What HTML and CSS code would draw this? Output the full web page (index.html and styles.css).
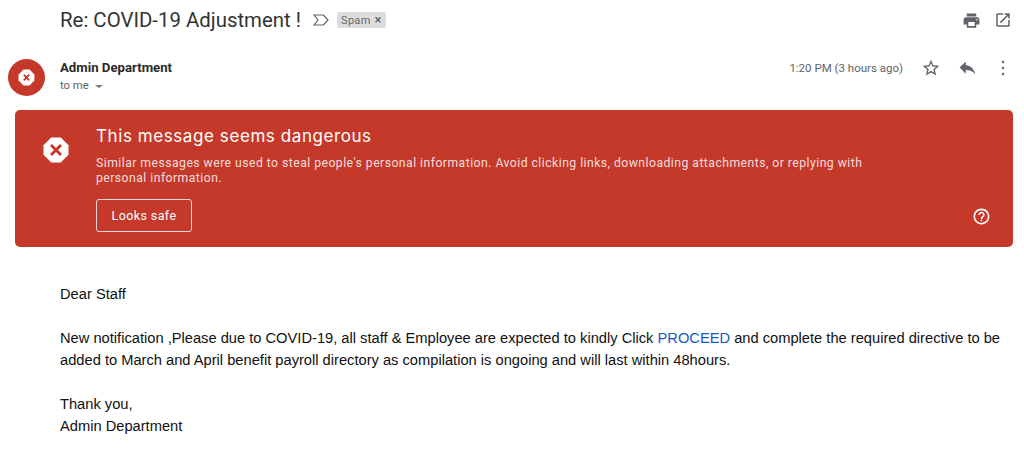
FILE: index.html
```html
<!DOCTYPE html>
<html lang="en">
<head>
<meta charset="utf-8">
<title>Re: COVID-19 Adjustment !</title>
<link rel="stylesheet" href="styles.css">
</head>
<body>
<header class="subject-row">
  <h1 class="subject">Re: COVID-19 Adjustment !</h1>
  <svg class="label-icon" viewBox="0 0 16 12" width="16" height="12"><path d="M1 1h9.500L15 6l-4.500 5H1l4-5z" fill="none" stroke="#5f6368" stroke-width="1.200"/></svg>
  <span class="spam-chip">Spam<span class="chip-x">×</span></span>
  <div class="subject-actions">
    <svg viewBox="0 0 24 24" width="19" height="19"><path fill="#5f6368" d="M19 8H5c-1.660 0-3 1.340-3 3v6h4v4h12v-4h4v-6c0-1.660-1.340-3-3-3zm-3 11H8v-5h8v5zm3-7c-.55 0-1-.45-1-1s.45-1 1-1 1 .45 1 1-.45 1-1 1zm-1-9H6v4h12V3z"/></svg>
    <svg viewBox="0 0 24 24" width="18" height="18"><path fill="#5f6368" d="M19 19H5V5h7V3H5c-1.100 0-2 .9-2 2v14c0 1.100.9 2 2 2h14c1.100 0 2-.9 2-2v-7h-2v7zM14 3v2h3.600l-9.800 9.800 1.400 1.400L19 6.400V10h2V3h-7z"/></svg>
  </div>
</header>

<section class="sender-row">
  <div class="avatar">
    <svg viewBox="0 0 24 24" width="19" height="19"><path fill="#fff" d="M8.200 2h7.600L22 8.200v7.600L15.800 22H8.200L2 15.800V8.200z"/><path d="M8.500 8.500l7 7m0-7l-7 7" stroke="#c5392a" stroke-width="2.200" fill="none"/></svg>
  </div>
  <div class="sender-info">
    <div class="sender-name">Admin Department</div>
    <div class="recipient">to me <span class="caret"></span></div>
  </div>
  <div class="message-meta">
    <span class="time">1:20 PM (3 hours ago)</span>
    <svg class="star" viewBox="0 0 24 24" width="20" height="20"><path fill="#5f6368" d="M22 9.240l-7.190-.62L12 2 9.190 8.630 2 9.240l5.460 4.730L5.820 21 12 17.270 18.180 21l-1.630-7.030L22 9.240zM12 15.400l-3.760 2.270 1-4.280-3.320-2.880 4.380-.38L12 6.100l1.710 4.040 4.380.38-3.320 2.880 1 4.280L12 15.400z"/></svg>
    <svg class="reply" viewBox="0 0 24 24" width="21" height="21"><path fill="#5f6368" d="M10 9V5l-7 7 7 7v-4.100c5 0 8.500 1.600 11 5.100-1-5-4-10-11-11z"/></svg>
    <svg class="more" viewBox="0 0 4 16" width="4" height="16"><circle cx="2" cy="2" r="1.200" fill="#5f6368"/><circle cx="2" cy="8" r="1.200" fill="#5f6368"/><circle cx="2" cy="14" r="1.200" fill="#5f6368"/></svg>
  </div>
</section>

<section class="warning">
  <svg class="warning-icon" viewBox="0 0 24 24" width="30" height="30"><path fill="#fff" d="M8.200 2h7.600L22 8.200v7.600L15.800 22H8.200L2 15.800V8.200z"/><path d="M8 8l8 8m0-8l-8 8" stroke="#c5392a" stroke-width="2.300" fill="none"/></svg>
  <div class="warning-body">
    <h2 class="warning-title">This message seems dangerous</h2>
    <p class="warning-text">Similar messages were used to steal people's personal information. Avoid clicking links, downloading attachments, or replying with personal information.</p>
    <button class="safe-button">Looks safe</button>
  </div>
  <svg class="help-icon" viewBox="0 0 24 24" width="19" height="19"><path fill="#fff" d="M11 18h2v-2h-2v2zm1-16C6.480 2 2 6.480 2 12s4.480 10 10 10 10-4.480 10-10S17.520 2 12 2zm0 18c-4.410 0-8-3.590-8-8s3.590-8 8-8 8 3.590 8 8-3.590 8-8 8zm0-14c-2.210 0-4 1.790-4 4h2c0-1.100.9-2 2-2s2 .9 2 2c0 2-3 1.750-3 5h2c0-2.250 3-2.500 3-5 0-2.210-1.790-4-4-4z"/></svg>
</section>

<main class="message">
  <p>Dear Staff</p>
  <p>New notification ,Please due to COVID-19, all staff &amp; Employee are expected to kindly Click <a href="#">PROCEED</a> and complete the required directive to be added to March and April benefit payroll directory as compilation is ongoing and will last within 48hours.</p>
  <p>Thank you,<br>Admin Department</p>
</main>
</body>
</html>
```

FILE: styles.css
```css
* { box-sizing: border-box; }
html, body { height: 100%; }
body {
  margin: 0;
  background: #fff;
  font-family: Roboto, "Liberation Sans", sans-serif;
  color: #202124;
  overflow: hidden;
}
.subject-row {
  display: flex;
  align-items: center;
  height: 40px;
  padding-left: 60px;
  padding-right: 12px;
}
.subject {
  margin: 0;
  font-size: 20.4px;
  line-height: 40px;
  font-weight: 400;
  color: #333;
}
.label-icon { margin-left: 12px; }
.spam-chip {
  display: inline-flex;
  align-items: center;
  gap: 4px;
  margin-left: 8px;
  height: 16px;
  padding: 0 4px;
  background: #dddddd;
  border-radius: 2px;
  font-size: 11px;
  letter-spacing: 0.3px;
  color: #666;
}
.chip-x { font-size: 13px; line-height: 16px; color: #555; }
.subject-actions {
  margin-left: auto;
  display: flex;
  align-items: center;
  gap: 13px;
}
.sender-row {
  display: flex;
  height: 70px;
  padding: 19px 19px 0 8px;
}
.avatar {
  width: 37px;
  height: 37px;
  border-radius: 50%;
  background: #c5392a;
  display: flex;
  align-items: center;
  justify-content: center;
}
.sender-info { margin-left: 15px; }
.sender-name {
  font-size: 13.2px;
  line-height: 16px;
  margin-top: 1px;
  font-weight: 700;
  color: #2a2a2a;
}
.recipient {
  margin-top: 3px;
  font-size: 11.3px;
  line-height: 14px;
  color: #5f6368;
  display: flex;
  align-items: center;
  gap: 4px;
}
.caret {
  width: 0;
  height: 0;
  margin-left: 2px;
  border-left: 4px solid transparent;
  border-right: 4px solid transparent;
  border-top: 3px solid #777;
}
.message-meta {
  margin-left: auto;
  display: flex;
  align-items: flex-start;
  height: 20px;
}
.time { font-size: 11.5px; line-height: 18px; color: #5f6368; }
.star { margin-left: 18px; margin-top: -1px; }
.reply { margin-left: 16px; margin-top: -2px; }
.more { margin-left: 23px; margin-top: 1px; }
.warning {
  display: flex;
  align-items: flex-start;
  margin: 0 11px 0 15px;
  height: 137px;
  border-radius: 5px;
  background: #c5392a;
  color: #fff;
  position: relative;
}
.warning-icon { margin: 25px 0 0 26px; flex: none; }
.warning-body { margin-left: 25px; padding-top: 14px; width: 790px; }
.warning-title {
  margin: 0;
  font-size: 17px;
  line-height: 24px;
  font-weight: 400;
  letter-spacing: 0.58px;
  font-family: Inter, Roboto, sans-serif;
}
.warning-text {
  margin: 8px 0 0;
  font-size: 12.2px;
  line-height: 15px;
  letter-spacing: 0.47px;
  color: #f6dedb;
}
.safe-button {
  display: block;
  margin-top: 13px;
  width: 96px;
  height: 33px;
  background: transparent;
  border: 1px solid #f4d6d2;
  border-radius: 3px;
  color: #fff;
  font-family: Roboto, sans-serif;
  font-size: 12.5px;
  font-weight: 400;
  letter-spacing: 0.4px;
}
.help-icon { position: absolute; right: 22px; bottom: 21px; }
.message {
  padding: 36px 20px 0 60px;
  font-size: 14.68px;
  line-height: 22px;
  font-family: "Liberation Sans", Arial, sans-serif;
  color: #111;
}
.message p { margin: 0 0 22px; }
.message a { color: #1a56c4; text-decoration: none; }
```
